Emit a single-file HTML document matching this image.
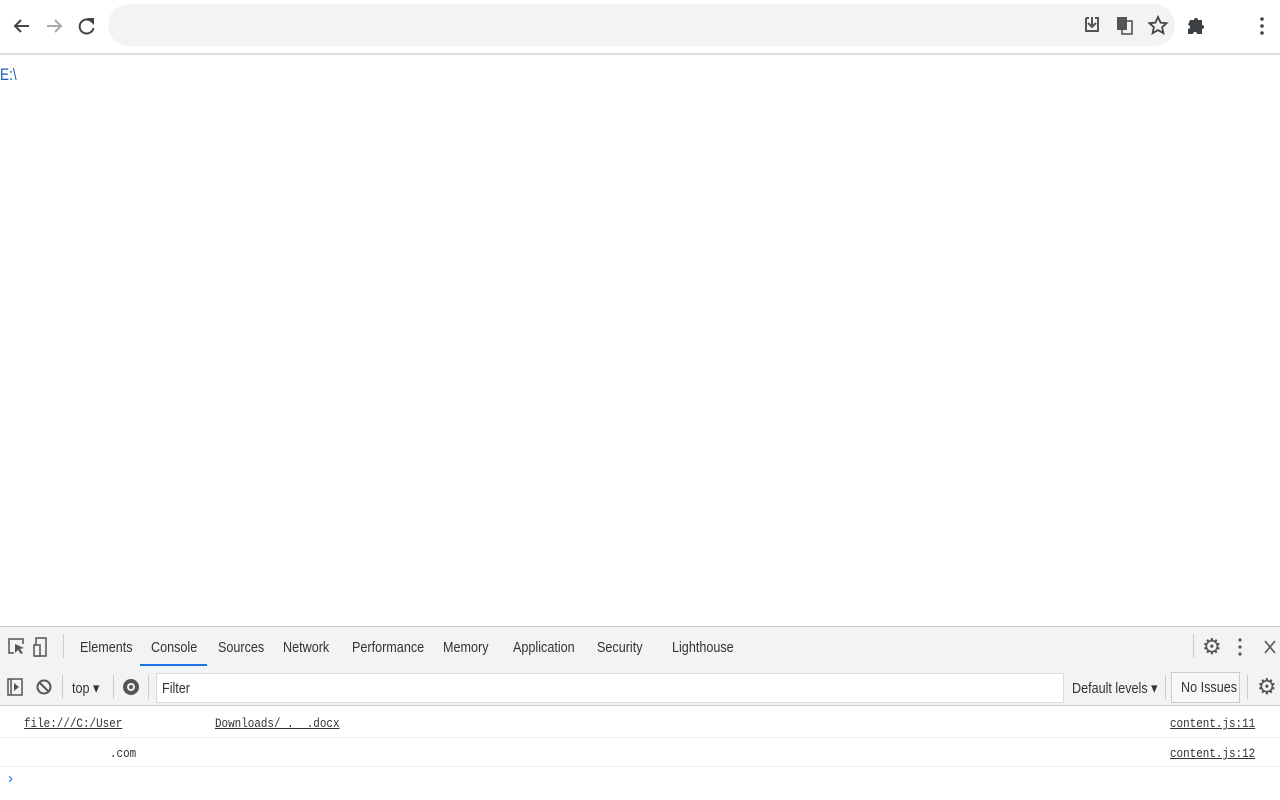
<!DOCTYPE html>
<html><head><style>
body{margin:0;width:1280px;height:800px;position:relative;background:#fff;font-family:"Liberation Sans",sans-serif;overflow:hidden}
.a{position:absolute;white-space:nowrap}
.t{font-size:15px;color:#333;transform:scaleX(.84);transform-origin:left center}
.m{font-family:"Liberation Mono",monospace;font-size:13px;color:#333;transform:scaleX(.84);transform-origin:left center}
.u{text-decoration:underline}
</style></head><body>
<div class="a" style="left:0;top:0;width:1280px;height:53px;background:#fff;border-bottom:2px solid #dadce0"></div>
<svg class="a" style="left:10px;top:14px" width="90" height="24" viewBox="0 0 90 24">
<path d="M19 12H5M11 6l-6 6 6 6" stroke="#444" stroke-width="2" fill="none"/>
<path d="M37 12h14M45 6l6 6-6 6" stroke="#aaa" stroke-width="2" fill="none"/>
<path d="M82 8a7 7 0 1 0 1.5 6" stroke="#444" stroke-width="2" fill="none"/><path d="M77 4h7v7z" fill="#444"/>
</svg>
<div class="a" style="left:108px;top:4px;width:1067px;height:42px;border-radius:21px;background:#f4f2f4"></div>
<svg class="a" style="left:1082px;top:14px" width="190" height="24" viewBox="0 0 190 24">
<path d="M4 4h3M13 4h3v13H4V4" stroke="#555" stroke-width="2" fill="none"/><path d="M10 3v9M6 9l4 4 4-4" stroke="#555" stroke-width="2" fill="none"/>
<rect x="35" y="3" width="10" height="13" fill="#555"/><rect x="40" y="7" width="10" height="13" fill="none" stroke="#555" stroke-width="1.6"/>
<path d="M76 3l2.6 5.6 6 .6-4.5 4 1.3 6-5.4-3.1-5.4 3.1 1.3-6-4.5-4 6-.6z" stroke="#444" stroke-width="1.8" fill="none"/>
<path d="M108 6h4a2 2 0 0 1 4 0h4v5a2 2 0 0 1 0 4v5h-5a2 2 0 0 0-4 0h-5v-5a2 2 0 0 0 0-4z" fill="#3c4043"/>
<circle cx="180" cy="5" r="1.8" fill="#444"/><circle cx="180" cy="12" r="1.8" fill="#444"/><circle cx="180" cy="19" r="1.8" fill="#444"/>
</svg>
<div class="a" style="left:0;top:65px;font-size:17px;color:#1a5fb4;transform:scaleX(.8);transform-origin:left">E:\</div>

<div class="a" style="left:0;top:626px;width:1280px;height:40px;background:#f1f3f4;border-top:1px solid #ccc;border-bottom:1px solid #ccc"></div>
<svg class="a" style="left:6px;top:636px" width="48" height="22" viewBox="0 0 48 22">
<path d="M8 17H3V3h14v5" stroke="#555" stroke-width="1.5" fill="none"/><path d="M9 8l9 4-4 1 3 4-2 1-3-4-3 3z" fill="#555"/>
<rect x="30" y="2" width="10" height="18" fill="none" stroke="#555" stroke-width="1.5"/><rect x="28" y="9" width="6" height="11" fill="#f1f3f4" stroke="#555" stroke-width="1.5"/>
</svg>
<div class="a" style="left:63px;top:634px;width:1px;height:24px;background:#ccc"></div>
<div class="a t" style="left:80px;top:639px">Elements</div>
<div class="a t" style="left:151px;top:639px">Console</div>
<div class="a" style="left:140px;top:664px;width:67px;height:2px;background:#1a73e8"></div>
<div class="a t" style="left:218px;top:639px">Sources</div>
<div class="a t" style="left:283px;top:639px">Network</div>
<div class="a t" style="left:352px;top:639px">Performance</div>
<div class="a t" style="left:443px;top:639px">Memory</div>
<div class="a t" style="left:513px;top:639px">Application</div>
<div class="a t" style="left:597px;top:639px">Security</div>
<div class="a t" style="left:672px;top:639px">Lighthouse</div>
<div class="a" style="left:1193px;top:634px;width:1px;height:24px;background:#ccc"></div>
<div class="a" style="left:1202px;top:634px;font-size:22px;color:#555">⚙</div>
<svg class="a" style="left:1234px;top:637px" width="46" height="20"><circle cx="6" cy="3" r="1.6" fill="#555"/><circle cx="6" cy="10" r="1.6" fill="#555"/><circle cx="6" cy="17" r="1.6" fill="#555"/><path d="M31 4l10 12M41 4L31 16" stroke="#555" stroke-width="1.6"/></svg>

<div class="a" style="left:0;top:667px;width:1280px;height:38px;background:#f1f3f4;border-bottom:1px solid #ccc"></div>
<svg class="a" style="left:6px;top:677px" width="50" height="20"><rect x="2" y="2" width="14" height="16" fill="none" stroke="#555" stroke-width="1.5"/><path d="M5 2v16" stroke="#555" stroke-width="1.5"/><path d="M8 6l5 4-5 4z" fill="#555"/><circle cx="38" cy="10" r="6.5" fill="none" stroke="#555" stroke-width="2"/><path d="M33.5 5.5l9 9" stroke="#555" stroke-width="2"/></svg>
<div class="a" style="left:62px;top:675px;width:1px;height:24px;background:#ccc"></div>
<div class="a t" style="left:72px;top:679px">top ▾</div>
<div class="a" style="left:113px;top:675px;width:1px;height:24px;background:#ccc"></div>
<svg class="a" style="left:121px;top:677px" width="20" height="20"><circle cx="10" cy="10" r="8" fill="#555"/><circle cx="10" cy="10" r="4" fill="#f1f3f4"/><circle cx="10" cy="10" r="2" fill="#555"/></svg>
<div class="a" style="left:148px;top:675px;width:1px;height:24px;background:#ccc"></div>
<div class="a" style="left:156px;top:673px;width:906px;height:28px;background:#fff;border:1px solid #ddd"></div>
<div class="a t" style="left:162px;top:680px">Filter</div>
<div class="a t" style="left:1072px;top:679px">Default levels ▾</div>
<div class="a" style="left:1165px;top:675px;width:1px;height:24px;background:#ccc"></div>
<div class="a" style="left:1171px;top:672px;width:67px;height:29px;border:1px solid #ccc;background:#f8f8f8"></div>
<div class="a t" style="left:1181px;top:679px">No Issues</div>
<div class="a" style="left:1247px;top:675px;width:1px;height:24px;background:#ccc"></div>
<div class="a" style="left:1257px;top:674px;font-size:22px;color:#555">⚙</div>

<div class="a m u" style="left:24px;top:716px">file:///C:/User</div>
<div class="a m u" style="left:215px;top:716px">Downloads/ . _.docx</div>
<div class="a m u" style="left:1170px;top:716px">content.js:11</div>
<div class="a" style="left:0;top:737px;width:1280px;height:1px;background:#eee"></div>
<div class="a m" style="left:110px;top:746px">.com</div>
<div class="a m u" style="left:1170px;top:746px">content.js:12</div>
<div class="a" style="left:0;top:766px;width:1280px;height:1px;background:#eee"></div>
<div class="a" style="left:8px;top:770px;color:#1a73e8;font-size:15px">›</div>
</body></html>
